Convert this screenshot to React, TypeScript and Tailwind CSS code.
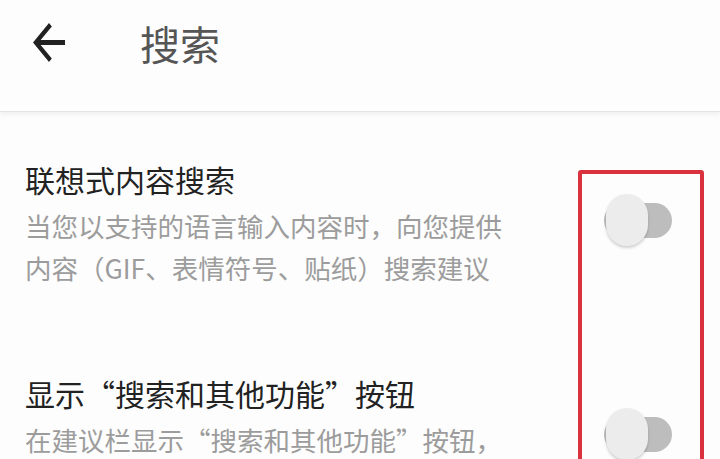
import React, { useState } from 'react';

const font = { fontFamily: '"Noto Sans CJK SC", "Noto Sans", sans-serif' };

interface SettingRowProps {
  title: string;
  summary: string;
  checked: boolean;
  onToggle: () => void;
}

const Toggle: React.FC<{ checked: boolean; onToggle: () => void }> = ({ checked, onToggle }) => (
  <button
    onClick={onToggle}
    className="relative flex items-center w-[70px] h-[52px] shrink-0"
  >
    <span
      className={`w-[68px] h-[35px] rounded-full ${checked ? 'bg-[#f4a6a6]' : 'bg-[#bdbdbd]'}`}
    />
    <span
      className={`absolute top-0 w-[42px] h-[52px] rounded-full shadow-[0_2px_3px_rgba(0,0,0,0.18)] ${
        checked ? 'left-[28px] bg-[#e53935]' : 'left-[2px] bg-[#ececec]'
      }`}
    />
  </button>
);

const SettingRow: React.FC<SettingRowProps> = ({ title, summary, checked, onToggle }) => (
  <div className="flex items-start">
    <div className="w-[604px] pl-[25px]">
      <div className="text-[30px] leading-[40px] text-[#222222]">{title}</div>
      <div className="mt-[6px] w-[484px] text-[26.5px] leading-[42px] text-[#9c9c9c]">{summary}</div>
    </div>
    <div className="mt-[35px]">
      <Toggle checked={checked} onToggle={onToggle} />
    </div>
  </div>
);

export default function App() {
  const [suggest, setSuggest] = useState(false);
  const [showButton, setShowButton] = useState(false);

  return (
    <div lang="zh-CN" style={font} className="relative w-[720px] h-[459px] overflow-hidden bg-[#fdfdfd]">
      <header className="h-[112px] bg-[#fdfdfd] border-b border-[#e4e4e4] shadow-[0_3px_5px_rgba(0,0,0,0.05)] flex items-start">
        <button className="ml-[33px] mt-[23px] text-[#212121]">
          <svg width="32" height="39" viewBox="4 4 16 16" preserveAspectRatio="none" fill="currentColor">
            <path d="M20 11H7.83l5.59-5.59L12 4l-8 8 8 8 1.41-1.41L7.83 13H20v-2z" />
          </svg>
        </button>
        <h1 className="ml-[75px] mt-[19px] text-[40px] leading-[48px] font-normal text-[#555555]">搜索</h1>
      </header>

      <div className="pt-[47px] flex flex-col gap-[84px]">
        <SettingRow
          title="联想式内容搜索"
          summary="当您以支持的语言输入内容时，向您提供内容（GIF、表情符号、贴纸）搜索建议"
          checked={suggest}
          onToggle={() => setSuggest(!suggest)}
        />
        <SettingRow
          title="显示“搜索和其他功能”按钮"
          summary="在建议栏显示“搜索和其他功能”按钮，以便使用搜索、翻译和其他功能"
          checked={showButton}
          onToggle={() => setShowButton(!showButton)}
        />
      </div>

      {/* annotation frame drawn over the switches */}
      <div className="absolute left-[578px] top-[170px] w-[126px] h-[320px] border-4 border-[#d9323e] rounded-[3px] pointer-events-none" />
    </div>
  );
}
